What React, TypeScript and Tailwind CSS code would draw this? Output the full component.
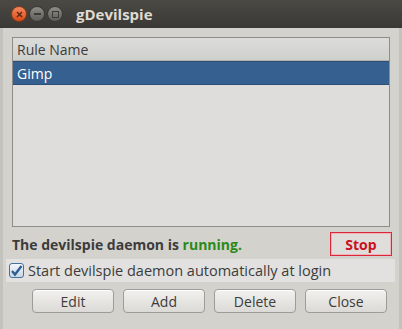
import { useState } from "react";

const font = { fontFamily: '"Open Sans", "Noto Sans", "DejaVu Sans", sans-serif' };

const TitleButton = ({ kind }: { kind: "close" | "min" | "max" }) => {
  if (kind === "close") {
    return (
      <div className="w-[16px] h-[16px] rounded-full bg-gradient-to-b from-[#f6885a] to-[#d64a14] border border-[#8a3a1c] flex items-center justify-center">
        <svg width="7" height="7" viewBox="0 0 7 7">
          <path d="M1 1 L6 6 M6 1 L1 6" stroke="#5a2410" strokeWidth="1.4" />
        </svg>
      </div>
    );
  }
  return (
    <div className="w-[16px] h-[16px] rounded-full bg-gradient-to-b from-[#8e8d88] to-[#5e5d58] border border-[#3a3935] flex items-center justify-center">
      {kind === "min" ? (
        <div className="w-[7px] h-[2px] bg-[#3c3b37]" />
      ) : (
        <div className="w-[7px] h-[7px] border-[1.5px] border-[#3c3b37]" />
      )}
    </div>
  );
};

const Btn = ({ label }: { label: string }) => (
  <button
    type="button"
    className="w-[82px] h-[24px] rounded-[4px] border border-[#9e9c97] bg-gradient-to-b from-[#f2f1ef] to-[#dcdad6] text-[14px] text-[#3c3c3c] shadow-[inset_0_1px_0_#ffffff] flex items-center justify-center"
  >
    {label}
  </button>
);

export default function App() {
  const [autoStart, setAutoStart] = useState(true);

  return (
    <div className="w-[402px] h-[329px] bg-[#d4d2cd] flex flex-col" style={font}>
      <div className="h-[28px] shrink-0 bg-gradient-to-b from-[#4a4944] to-[#3a3935] flex items-center pl-[11px]">
        <div className="flex items-center gap-[2px]">
          <TitleButton kind="close" />
          <TitleButton kind="min" />
          <TitleButton kind="max" />
        </div>
        <span className="ml-[13px] text-[15px] font-bold text-[#dfdbd2]">gDevilspie</span>
      </div>

      <div className="flex-1 flex flex-col border-x-[3px] border-[#c4c2bd] pt-[9px]">
        <div className="mx-[9px] h-[190px] border border-[#8f8d88] bg-[#dedddb] flex flex-col">
          <div className="h-[23px] bg-gradient-to-b from-[#dcdcda] to-[#cfcfcc] border-b border-[#b5b3ae] flex items-center pl-[4px] text-[14px] text-[#3c3c3c]">
            Rule Name
          </div>
          <div className="h-[24px] bg-[#35608f] border-y border-[#2c4f78] flex items-center pl-[4px] text-[14px] text-white">
            Gimp
          </div>
        </div>

        <div className="mt-[5px] ml-[9px] mr-[7px] flex items-center justify-between">
          <div className="text-[14px] font-bold text-[#3c3c3c]">
            The devilspie daemon is <span className="text-[#2a8a18]">running.</span>
          </div>
          <button
            type="button"
            className="w-[62px] h-[24px] border border-[#d8283a] bg-[#e0dedb] shadow-[inset_0_0_0_1px_#f3b0b6] text-[14px] font-bold text-[#cc1020] flex items-center justify-center"
          >
            Stop
          </button>
        </div>

        <label className="mt-[3px] ml-[3px] mr-[4px] h-[23px] bg-[#e2e1df] flex items-center pl-[3px] text-[14.5px] text-[#3c3c3c] cursor-default">
          <span
            onClick={() => setAutoStart(!autoStart)}
            className="w-[15px] h-[15px] rounded-[3px] border border-[#47709c] bg-gradient-to-b from-[#f4f7fb] to-[#c9d6e6] flex items-center justify-center mr-[4px]"
          >
            {autoStart && (
              <svg width="13" height="13" viewBox="0 0 13 13">
                <path d="M2 7 L5 10.5 L11.5 2" fill="none" stroke="#2f5f94" strokeWidth="2.4" />
              </svg>
            )}
          </span>
          Start devilspie daemon automatically at login
        </label>

        <div className="mt-[7px] flex items-center gap-[9px] pl-[29px]">
          <Btn label="Edit" />
          <Btn label="Add" />
          <Btn label="Delete" />
          <Btn label="Close" />
        </div>
      </div>
    </div>
  );
}
